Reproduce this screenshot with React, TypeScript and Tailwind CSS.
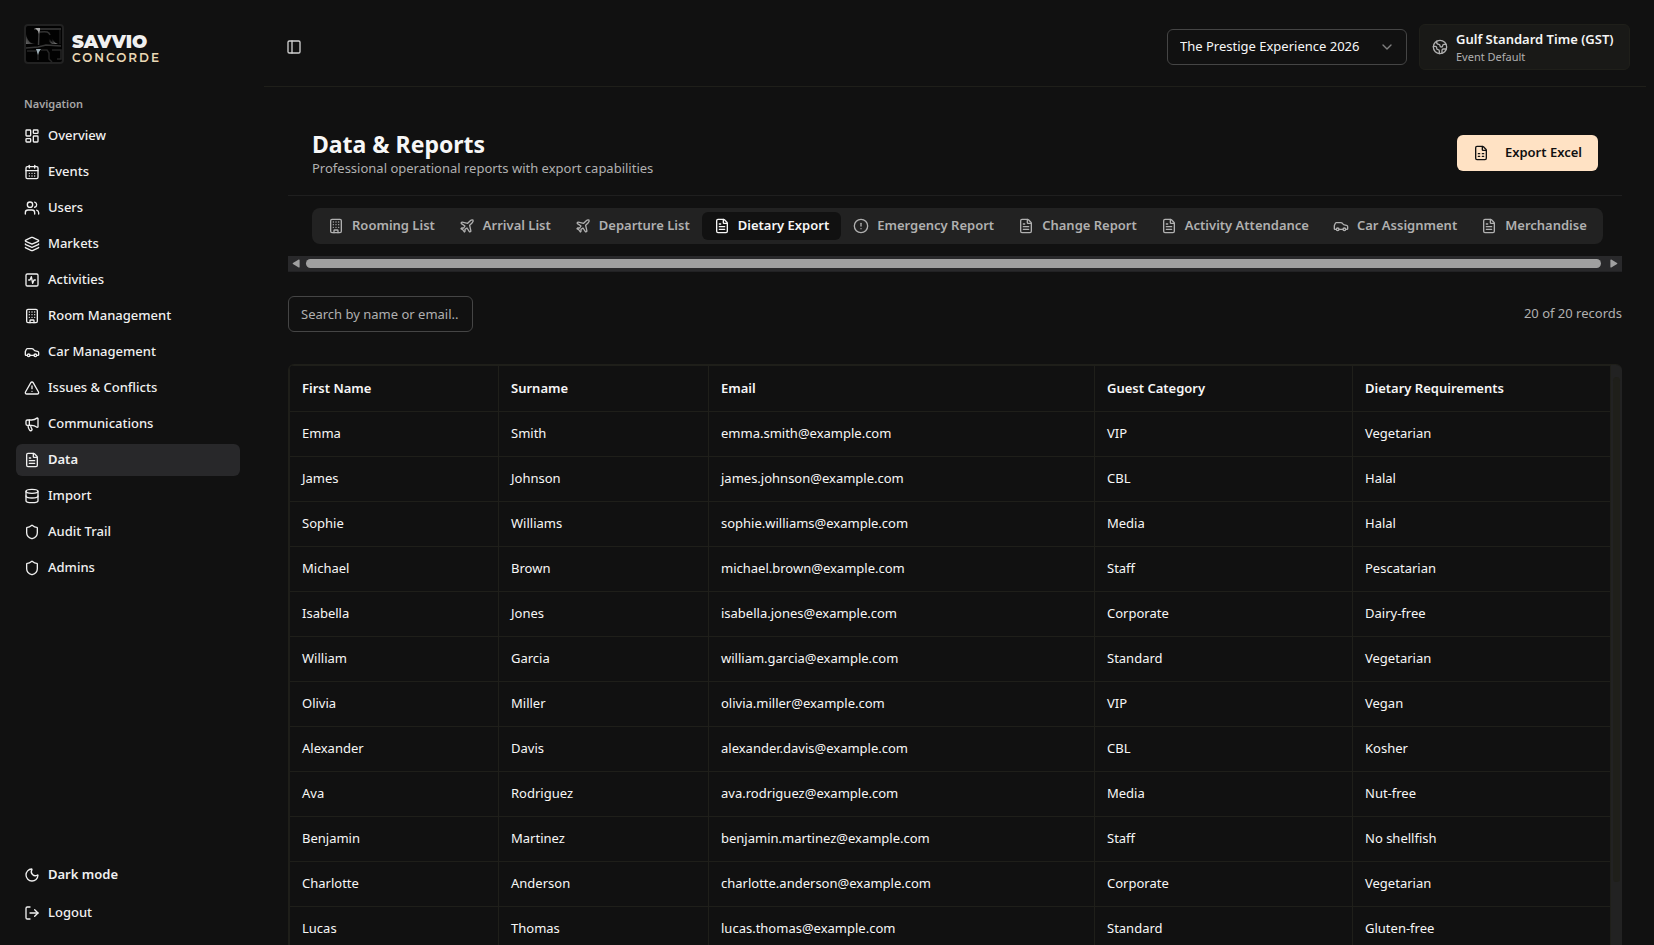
import { useState } from 'react';
import {
  Building,
  CalendarDays,
  Car,
  ChevronDown,
  CircleAlert,
  Database,
  Earth,
  FileSpreadsheet,
  FileText,
  Layers,
  LayoutDashboard,
  LogOut,
  Megaphone,
  Moon,
  PanelLeft,
  Plane,
  Shield,
  SquareActivity,
  TriangleAlert,
  Users,
} from 'lucide-react';
import clsx from 'clsx';

const navItems = [
  { label: 'Overview', icon: LayoutDashboard },
  { label: 'Events', icon: CalendarDays },
  { label: 'Users', icon: Users },
  { label: 'Markets', icon: Layers },
  { label: 'Activities', icon: SquareActivity },
  { label: 'Room Management', icon: Building },
  { label: 'Car Management', icon: Car },
  { label: 'Issues & Conflicts', icon: TriangleAlert },
  { label: 'Communications', icon: Megaphone },
  { label: 'Data', icon: FileText },
  { label: 'Import', icon: Database },
  { label: 'Audit Trail', icon: Shield },
  { label: 'Admins', icon: Shield },
];

const tabs = [
  { label: 'Rooming List', icon: Building },
  { label: 'Arrival List', icon: Plane },
  { label: 'Departure List', icon: Plane },
  { label: 'Dietary Export', icon: FileText },
  { label: 'Emergency Report', icon: CircleAlert },
  { label: 'Change Report', icon: FileText },
  { label: 'Activity Attendance', icon: FileText },
  { label: 'Car Assignment', icon: Car },
  { label: 'Merchandise', icon: FileText },
];

const columns = ['First Name', 'Surname', 'Email', 'Guest Category', 'Dietary Requirements'];

const guests = [
  ['Emma', 'Smith', 'emma.smith@example.com', 'VIP', 'Vegetarian'],
  ['James', 'Johnson', 'james.johnson@example.com', 'CBL', 'Halal'],
  ['Sophie', 'Williams', 'sophie.williams@example.com', 'Media', 'Halal'],
  ['Michael', 'Brown', 'michael.brown@example.com', 'Staff', 'Pescatarian'],
  ['Isabella', 'Jones', 'isabella.jones@example.com', 'Corporate', 'Dairy-free'],
  ['William', 'Garcia', 'william.garcia@example.com', 'Standard', 'Vegetarian'],
  ['Olivia', 'Miller', 'olivia.miller@example.com', 'VIP', 'Vegan'],
  ['Alexander', 'Davis', 'alexander.davis@example.com', 'CBL', 'Kosher'],
  ['Ava', 'Rodriguez', 'ava.rodriguez@example.com', 'Media', 'Nut-free'],
  ['Benjamin', 'Martinez', 'benjamin.martinez@example.com', 'Staff', 'No shellfish'],
  ['Charlotte', 'Anderson', 'charlotte.anderson@example.com', 'Corporate', 'Vegetarian'],
  ['Lucas', 'Thomas', 'lucas.thomas@example.com', 'Standard', 'Gluten-free'],
];

function LogoMark() {
  return (
    <svg viewBox="0 0 40 40" className="size-10 shrink-0" fill="none" aria-hidden="true">
      <defs>
        <linearGradient id="shine" x1="0" y1="0" x2="1" y2="1">
          <stop offset="0.3" stopColor="#040404" />
          <stop offset="1" stopColor="#a0a0a0" />
        </linearGradient>
        <linearGradient id="edge" x1="1" y1="0" x2="0" y2="1">
          <stop offset="0.3" stopColor="#040404" />
          <stop offset="1" stopColor="#6a6a6a" />
        </linearGradient>
      </defs>
      <rect x="1" y="1" width="38" height="38" rx="3" fill="#020202" stroke="#222" strokeWidth="2" />
      <path d="M10 5h27" stroke="#3c3c3c" strokeWidth="1.500" />
      <path d="M2 10c1 6 4 10 10 10H2z" fill="url(#edge)" />
      <path d="M14 4l1 5-.5 12" stroke="#3c3c3c" strokeWidth="1.500" />
      <path d="M11 4h5v2l-1 4-1-3z" fill="#a8a8a8" />
      <path d="M16 8c7-1 9 0 10 3" stroke="#333" strokeWidth="1.500" />
      <path d="M25 10c0 5 2 9 8 10h-4c-5-1-5-6-4-10z" fill="url(#shine)" />
      <path d="M28 11c0 4 2 8 6 9h-5c-2-2-2-6-1-9z" fill="url(#shine)" />
      <path d="M36 6v14" stroke="#242424" />
      <path d="M2 24l12-1 8-2 15 1" stroke="#363636" strokeWidth="1.500" />
      <path d="M3 27h9M14 25v11M17 26h6l2 3v6l3 3M28 26h9v9h-4" stroke="#262626" strokeWidth="1.500" />
      <path d="M12 25h5l-2 3-1 3z" fill="#9fb0b8" />
    </svg>
  );
}

function Sidebar() {
  return (
    <aside className="flex w-64 shrink-0 flex-col px-4 text-[#f0f0f0]">
      <div className="flex h-22 items-center gap-2 px-2">
        <LogoMark />
        <div className="pt-2 font-[Montserrat,Inter,sans-serif]">
          <div className="text-[18px] leading-5 font-black">SAVVIO</div>
          <div className="text-[12px] leading-3 font-semibold tracking-[2px] text-[#ead9b5]">CONCORDE</div>
        </div>
      </div>

      <div className="flex h-8 items-center px-2 text-[11px] font-semibold text-[#a6a6a6]">Navigation</div>
      <nav className="flex flex-col gap-1">
        {navItems.map(({ label, icon: Icon }) => (
          <a
            key={label}
            href="#"
            className={clsx(
              'flex h-8 items-center gap-2 rounded-md px-2 text-[13px]',
              label === 'Data' ? 'bg-[#28282a] font-semibold' : 'font-medium',
            )}
          >
            <Icon className="size-4" />
            {label}
          </a>
        ))}
      </nav>

      <div className="mt-auto flex flex-col gap-1 pb-4">
        <button className="flex h-9 items-center gap-2 px-2 text-[13px] font-semibold">
          <Moon className="size-4" />
          Dark mode
        </button>
        <button className="flex h-8 items-center gap-2 px-2 text-[13px] font-medium">
          <LogOut className="size-4" />
          Logout
        </button>
      </div>
    </aside>
  );
}

function TopBar() {
  return (
    <header className="flex h-[87px] shrink-0 items-center justify-between border-b border-[#1f1f1a] pt-2 pr-4 pl-[22px]">
      <button aria-label="Toggle sidebar" className="flex size-4 items-center justify-center text-[#d0d0d0]">
        <PanelLeft className="size-4" />
      </button>
      <div className="flex items-center gap-3">
        <div className="relative">
          <select
            aria-label="Event"
            className="h-9 w-60 appearance-none rounded-md border border-[#454545] bg-[#111] pl-3 text-[13px] text-[#f7f7f7]"
          >
            <option>The Prestige Experience 2026</option>
          </select>
          <ChevronDown className="pointer-events-none absolute top-2.5 right-3 size-4 text-[#808080]" />
        </div>
        <div className="flex h-[46px] min-w-[211px] items-center gap-2 rounded-md border border-[#1f1f1a] bg-[#191917] px-3">
          <Earth className="size-4 text-[#b0b0b0]" />
          <div>
            <div className="text-[13px] leading-5 font-semibold text-[#f5f5f5]">Gulf Standard Time (GST)</div>
            <div className="text-[11px] leading-4 text-[#b0b0b0]">Event Default</div>
          </div>
        </div>
      </div>
    </header>
  );
}

function ReportTabs() {
  const [active, setActive] = useState('Dietary Export');

  return (
    <div className="px-6 py-3">
      <div role="tablist" className="flex h-9 w-max items-center rounded-lg bg-[#222] px-1">
        {tabs.map(({ label, icon: Icon }) => (
          <button
            key={label}
            role="tab"
            aria-selected={label === active}
            onClick={() => setActive(label)}
            className={clsx(
              'flex h-7 items-center gap-2 rounded-md px-3 text-[13px] font-semibold whitespace-nowrap',
              label === active ? 'bg-[#111] text-[#f7f7f7]' : 'text-[#b0b0b0]',
            )}
          >
            <Icon className="size-4" />
            {label}
          </button>
        ))}
      </div>
    </div>
  );
}

function TabsScrollbar() {
  return (
    <div className="flex h-4 items-center gap-1.5 border-b border-[#222224] bg-[#29292b] px-1 text-[#a0a0a0]">
      <svg viewBox="0 0 8 10" className="h-[9px] w-2" fill="currentColor" aria-hidden="true">
        <path d="M7 .5C7.600.3 8 .6 8 1.200v7.600c0 .6-.4.9-1 .7L.6 5.600a.8.8 0 0 1 0-1.200z" />
      </svg>
      <div className="h-[9px] flex-1 rounded-full bg-[#a0a0a0]" />
      <svg viewBox="0 0 8 10" className="ml-[3px] h-[9px] w-2" fill="currentColor" aria-hidden="true">
        <path d="M1 .5C.4.3 0 .6 0 1.200v7.600c0 .6.4.9 1 .7l6.400-3.900a.8.8 0 0 0 0-1.200z" />
      </svg>
    </div>
  );
}

function GuestTable() {
  return (
    <div className="mt-8 flex items-start overflow-hidden rounded-t-md border-t border-l border-[#1f1f1a]">
      <table className="flex-1 table-fixed border-collapse text-left text-[13px] text-[#f7f7f7]">
        <colgroup>
          <col className="w-[209px]" />
          <col className="w-[210px]" />
          <col className="w-[386px]" />
          <col className="w-[258px]" />
          <col />
        </colgroup>
        <thead>
          <tr className="h-[46px]">
            {columns.map((column) => (
              <th key={column} className="border border-[#1f1f1a] px-3 font-semibold">
                {column}
              </th>
            ))}
          </tr>
        </thead>
        <tbody>
          {guests.map((guest) => (
            <tr key={guest[2]} className="h-[45px]">
              {guest.map((value, i) => (
                <td key={columns[i]} className="border border-[#1f1f1a] px-3">
                  {value}
                </td>
              ))}
            </tr>
          ))}
        </tbody>
      </table>
      <div className="flex w-[11px] shrink-0 flex-col items-center self-stretch bg-[#222] pt-3">
        <div className="h-[505px] w-[7px] rounded-full bg-[#1f1f1a]" />
      </div>
    </div>
  );
}

export default function App() {
  return (
    <div className="flex h-screen overflow-hidden bg-[#111] font-['Noto_Sans','Open_Sans',sans-serif]">
      <Sidebar />
      <main className="mx-2 flex min-w-0 flex-1 flex-col">
        <TopBar />
        <div className="px-6 pt-6">
          <section>
            <div className="flex h-[85px] items-center justify-between border-b border-[#1f1f1f] px-6">
              <div className="pt-0.5">
                <h1 className="text-[23px] leading-7 font-bold text-[#f7f7f7]">Data &amp; Reports</h1>
                <p className="text-[13px] leading-5 text-[#b0b0b0]">Professional operational reports with export capabilities</p>
              </div>
              <button className="flex h-9 items-center gap-4 rounded-md bg-[#ffe2c4] px-4 text-[13px] font-semibold text-[#111]">
                <FileSpreadsheet className="size-4" />
                Export Excel
              </button>
            </div>
            <ReportTabs />
            <TabsScrollbar />
          </section>

          <div className="mt-6 flex items-center justify-between">
            <input
              type="text"
              aria-label="Search guests"
              placeholder="Search by name or email.."
              className="h-9 w-[185px] rounded-md border border-[#454545] bg-transparent px-3 text-[13px] text-[#f7f7f7] placeholder:text-[#b0b0b0]"
            />
            <span className="text-[13px] text-[#b0b0b0]">20 of 20 records</span>
          </div>

          <GuestTable />
        </div>
      </main>
    </div>
  );
}
